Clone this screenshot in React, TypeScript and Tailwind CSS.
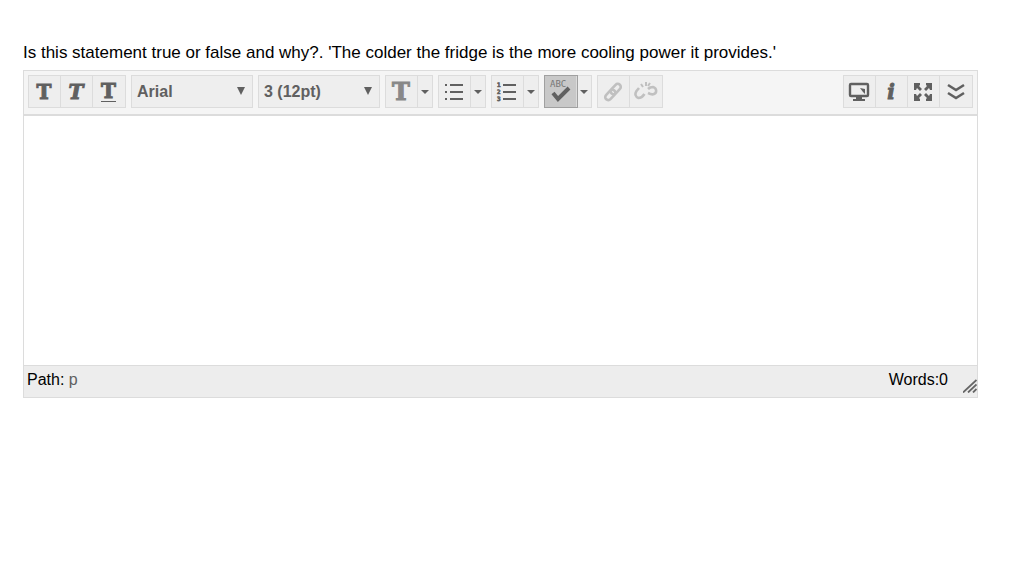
import { useState } from "react";
import type { ReactNode } from "react";

export default function App() {
  const [text, setText] = useState("");
  const [spelling, setSpelling] = useState(true);
  const words = text.split(/\s+/).filter(Boolean).length;

  return (
    <main className="pt-10 pr-[46px] pl-[23px] font-['Liberation_Sans',Arial,sans-serif] text-black">
      <label htmlFor="answer" className="block h-[30px] text-[17px] leading-[26px]">
        Is this statement true or false and why?. 'The colder the fridge is the more cooling power it provides.'
      </label>
      <section className="border border-[#dcdcdc]">
        <div role="toolbar" aria-label="Formatting" className="flex items-start justify-between border-b-2 border-[#dcdcdc] bg-[#f5f5f5] px-1 pt-1 pb-[6px]">
          <div className="flex gap-[5px]">
            <Group>
              <Tool label="Bold"><Letter className="text-[20px]">T</Letter></Tool>
              <Tool label="Italic"><Letter className="text-[20px] italic">T</Letter></Tool>
              <Tool label="Underline">
                <Letter className="border-b border-[#606060] text-[20px]">T</Letter>
              </Tool>
            </Group>
            <Picker label="Font family" options={["Arial", "Courier New", "Georgia", "Verdana"]} initial="Arial" />
            <Picker label="Font size" options={["1 (8pt)", "2 (10pt)", "3 (12pt)", "4 (14pt)", "5 (18pt)"]} initial="3 (12pt)" />
            <Group>
              <Tool label="Text color"><Letter className="text-[24px] text-[#888888]">T</Letter></Tool>
              <Arrow label="Text color options" />
            </Group>
            <Group>
              <Tool label="Bullet list"><BulletIcon /></Tool>
              <Arrow label="Bullet list options" />
            </Group>
            <Group>
              <Tool label="Numbered list"><NumberIcon /></Tool>
              <Arrow label="Numbered list options" />
            </Group>
            <Group>
              <Tool label="Spellcheck" active={spelling} onClick={() => setSpelling(!spelling)}><SpellIcon /></Tool>
              <Arrow label="Spellcheck options" />
            </Group>
            <Group>
              <Tool label="Insert link" disabled><LinkIcon /></Tool>
              <Tool label="Remove link" disabled><UnlinkIcon /></Tool>
            </Group>
          </div>
          <Group>
            <Tool label="Preview"><ScreenIcon /></Tool>
            <Tool label="Help"><Letter className="text-[20px] italic">i</Letter></Tool>
            <Tool label="Full screen"><ExpandIcon /></Tool>
            <Tool label="Show more"><MoreIcon /></Tool>
          </Group>
        </div>
        <textarea
          id="answer"
          value={text}
          onChange={(e) => setText(e.target.value)}
          className="block h-[249px] w-full resize-none bg-white p-2 text-base outline-none"
        />
        <footer className="flex h-8 justify-between border-t border-[#dcdcdc] bg-[#ededed] pl-[3px] text-base leading-[27px]">
          <span>Path: <span className="text-[#606060]">p</span></span>
          <span className="flex items-end gap-[15px]">
            <span className="self-start">Words:{words}</span>
            <svg viewBox="0 0 14 14" className="mb-1 h-[14px] w-[14px]" fill="none" stroke="#666666" strokeWidth="1.8">
              <path d="M0 13.5 13.5 1M5 13.5l8.5-8M10 13.5l3.5-3.5" />
            </svg>
          </span>
        </footer>
      </section>
    </main>
  );
}

function Group({ children }: { children: ReactNode }) {
  return <div className="flex h-[33px] divide-x divide-[#dcdcdc] border border-[#dcdcdc] bg-[#eeeeee]">{children}</div>;
}

type ToolProps = { label: string; active?: boolean; disabled?: boolean; onClick?: () => void; children: ReactNode };

function Tool({ label, active, disabled, onClick, children }: ToolProps) {
  return (
    <button
      type="button"
      aria-label={label}
      disabled={disabled}
      onClick={onClick}
      className={`flex w-8 items-center justify-center pr-px ${disabled ? "text-[#c0c0c0]" : "text-[#606060]"} ${active ? "bg-[#c8c8c8] outline outline-[#a0a0a0]" : ""}`}
    >
      {children}
    </button>
  );
}

function Arrow({ label }: { label: string }) {
  return (
    <button type="button" aria-label={label} className="flex w-[14px] items-center justify-center">
      <svg viewBox="0 0 8 4" className="h-1 w-2" fill="#606060"><path d="M0 0h8L4 4z" /></svg>
    </button>
  );
}

function Picker({ label, options, initial }: { label: string; options: string[]; initial: string }) {
  return (
    <div className="relative h-[33px] w-[122px] border border-[#dcdcdc] bg-[#eeeeee]">
      <select aria-label={label} defaultValue={initial} className="h-full w-full appearance-none pl-[5px] text-base font-bold text-[#606060] outline-none">
        {options.map((option) => <option key={option}>{option}</option>)}
      </select>
      <svg viewBox="0 0 8 8" className="pointer-events-none absolute top-[11px] right-[7px] h-2 w-2" fill="#606060"><path d="M0 0h8L4 8z" /></svg>
    </div>
  );
}

function Letter({ className, children }: { className: string; children: ReactNode }) {
  return <span className={`font-['DejaVu_Serif',serif] leading-5 font-bold [-webkit-text-stroke:1px] ${className}`}>{children}</span>;
}

function BulletIcon() {
  return (
    <svg viewBox="0 0 20 20" className="h-5 w-5" fill="currentColor">
      <path d="M1 2h2v2H1zM6 2h13v2H6zM1 9h2v2H1zM6 9h13v2H6zM1 16h2v2H1zM6 16h13v2H6z" />
    </svg>
  );
}

function NumberIcon() {
  return (
    <svg viewBox="0 0 22 22" className="h-[22px] w-[22px]" fill="currentColor">
      <path d="M7 3h13v2H7zM7 10h13v2H7zM7 17h13v2H7z" />
      <g className="font-['DejaVu_Sans_Mono',monospace] text-[6px] font-bold" stroke="currentColor" strokeWidth="0.6">
        <text x="1" y="6">1</text>
        <text x="1" y="13">2</text>
        <text x="1" y="20">3</text>
      </g>
    </svg>
  );
}

function SpellIcon() {
  return (
    <svg viewBox="0 0 24 26" className="h-[26px] w-6" fill="none" stroke="currentColor">
      <text x="2" y="8" fill="#777777" stroke="none" className="font-['DejaVu_Sans_Mono',monospace] text-[9px]">ABC</text>
      <path d="M5 14l5 6L21 9" strokeWidth="4" />
    </svg>
  );
}

function LinkIcon() {
  return (
    <svg viewBox="0 0 20 20" className="h-5 w-5" fill="none" stroke="currentColor" strokeWidth="2.6">
      <g transform="rotate(-47 10 10)">
        <rect x="0" y="7" width="12" height="6" rx="3" />
        <rect x="8" y="7" width="12" height="6" rx="3" />
      </g>
    </svg>
  );
}

function UnlinkIcon() {
  return (
    <svg viewBox="0 0 24 20" className="h-5 w-6" fill="none" stroke="currentColor" strokeWidth="2.6">
      <path d="M5 6 2.5 9c-2 3-1 6 2 7 3 0 4-1 6-4" />
      <path d="M14 7c2-2 3-2 5-2 4 1 4 6 1 7-2 1-4 0-6-1" />
      <path d="M7 2l2 3M12 0v4M16 1l-2 3" strokeWidth="2" />
    </svg>
  );
}

function ScreenIcon() {
  return (
    <svg viewBox="0 0 22 20" className="h-5 w-[22px]" fill="none" stroke="currentColor" strokeWidth="2.4">
      <rect x="2" y="2" width="18" height="12" rx="1" />
      <path d="M8 14h6v3h3v2H5v-2h3z" fill="currentColor" stroke="none" />
      <path d="M12 6l5 1v5l-2-2z" fill="currentColor" stroke="none" />
    </svg>
  );
}

function ExpandIcon() {
  return (
    <svg viewBox="0 0 20 20" className="h-5 w-5" fill="currentColor">
      <path d="M1 1h6v2L6 4l3 3-2 2-3-3-1 2H1zM19 1v7h-2l-1-2-3 3-2-2 3-3-1-1V1zM1 19v-7h2l1 2 3-3 2 2-3 3 1 1v2zM19 19h-6v-2l1-1-3-3 2-2 3 3 1-2h2z" />
    </svg>
  );
}

function MoreIcon() {
  return (
    <svg viewBox="0 0 18 18" className="h-[18px] w-[18px]" fill="none" stroke="currentColor" strokeWidth="2.6">
      <path d="M1 2l8 5 8-5M1 10l8 5 8-5" />
    </svg>
  );
}
